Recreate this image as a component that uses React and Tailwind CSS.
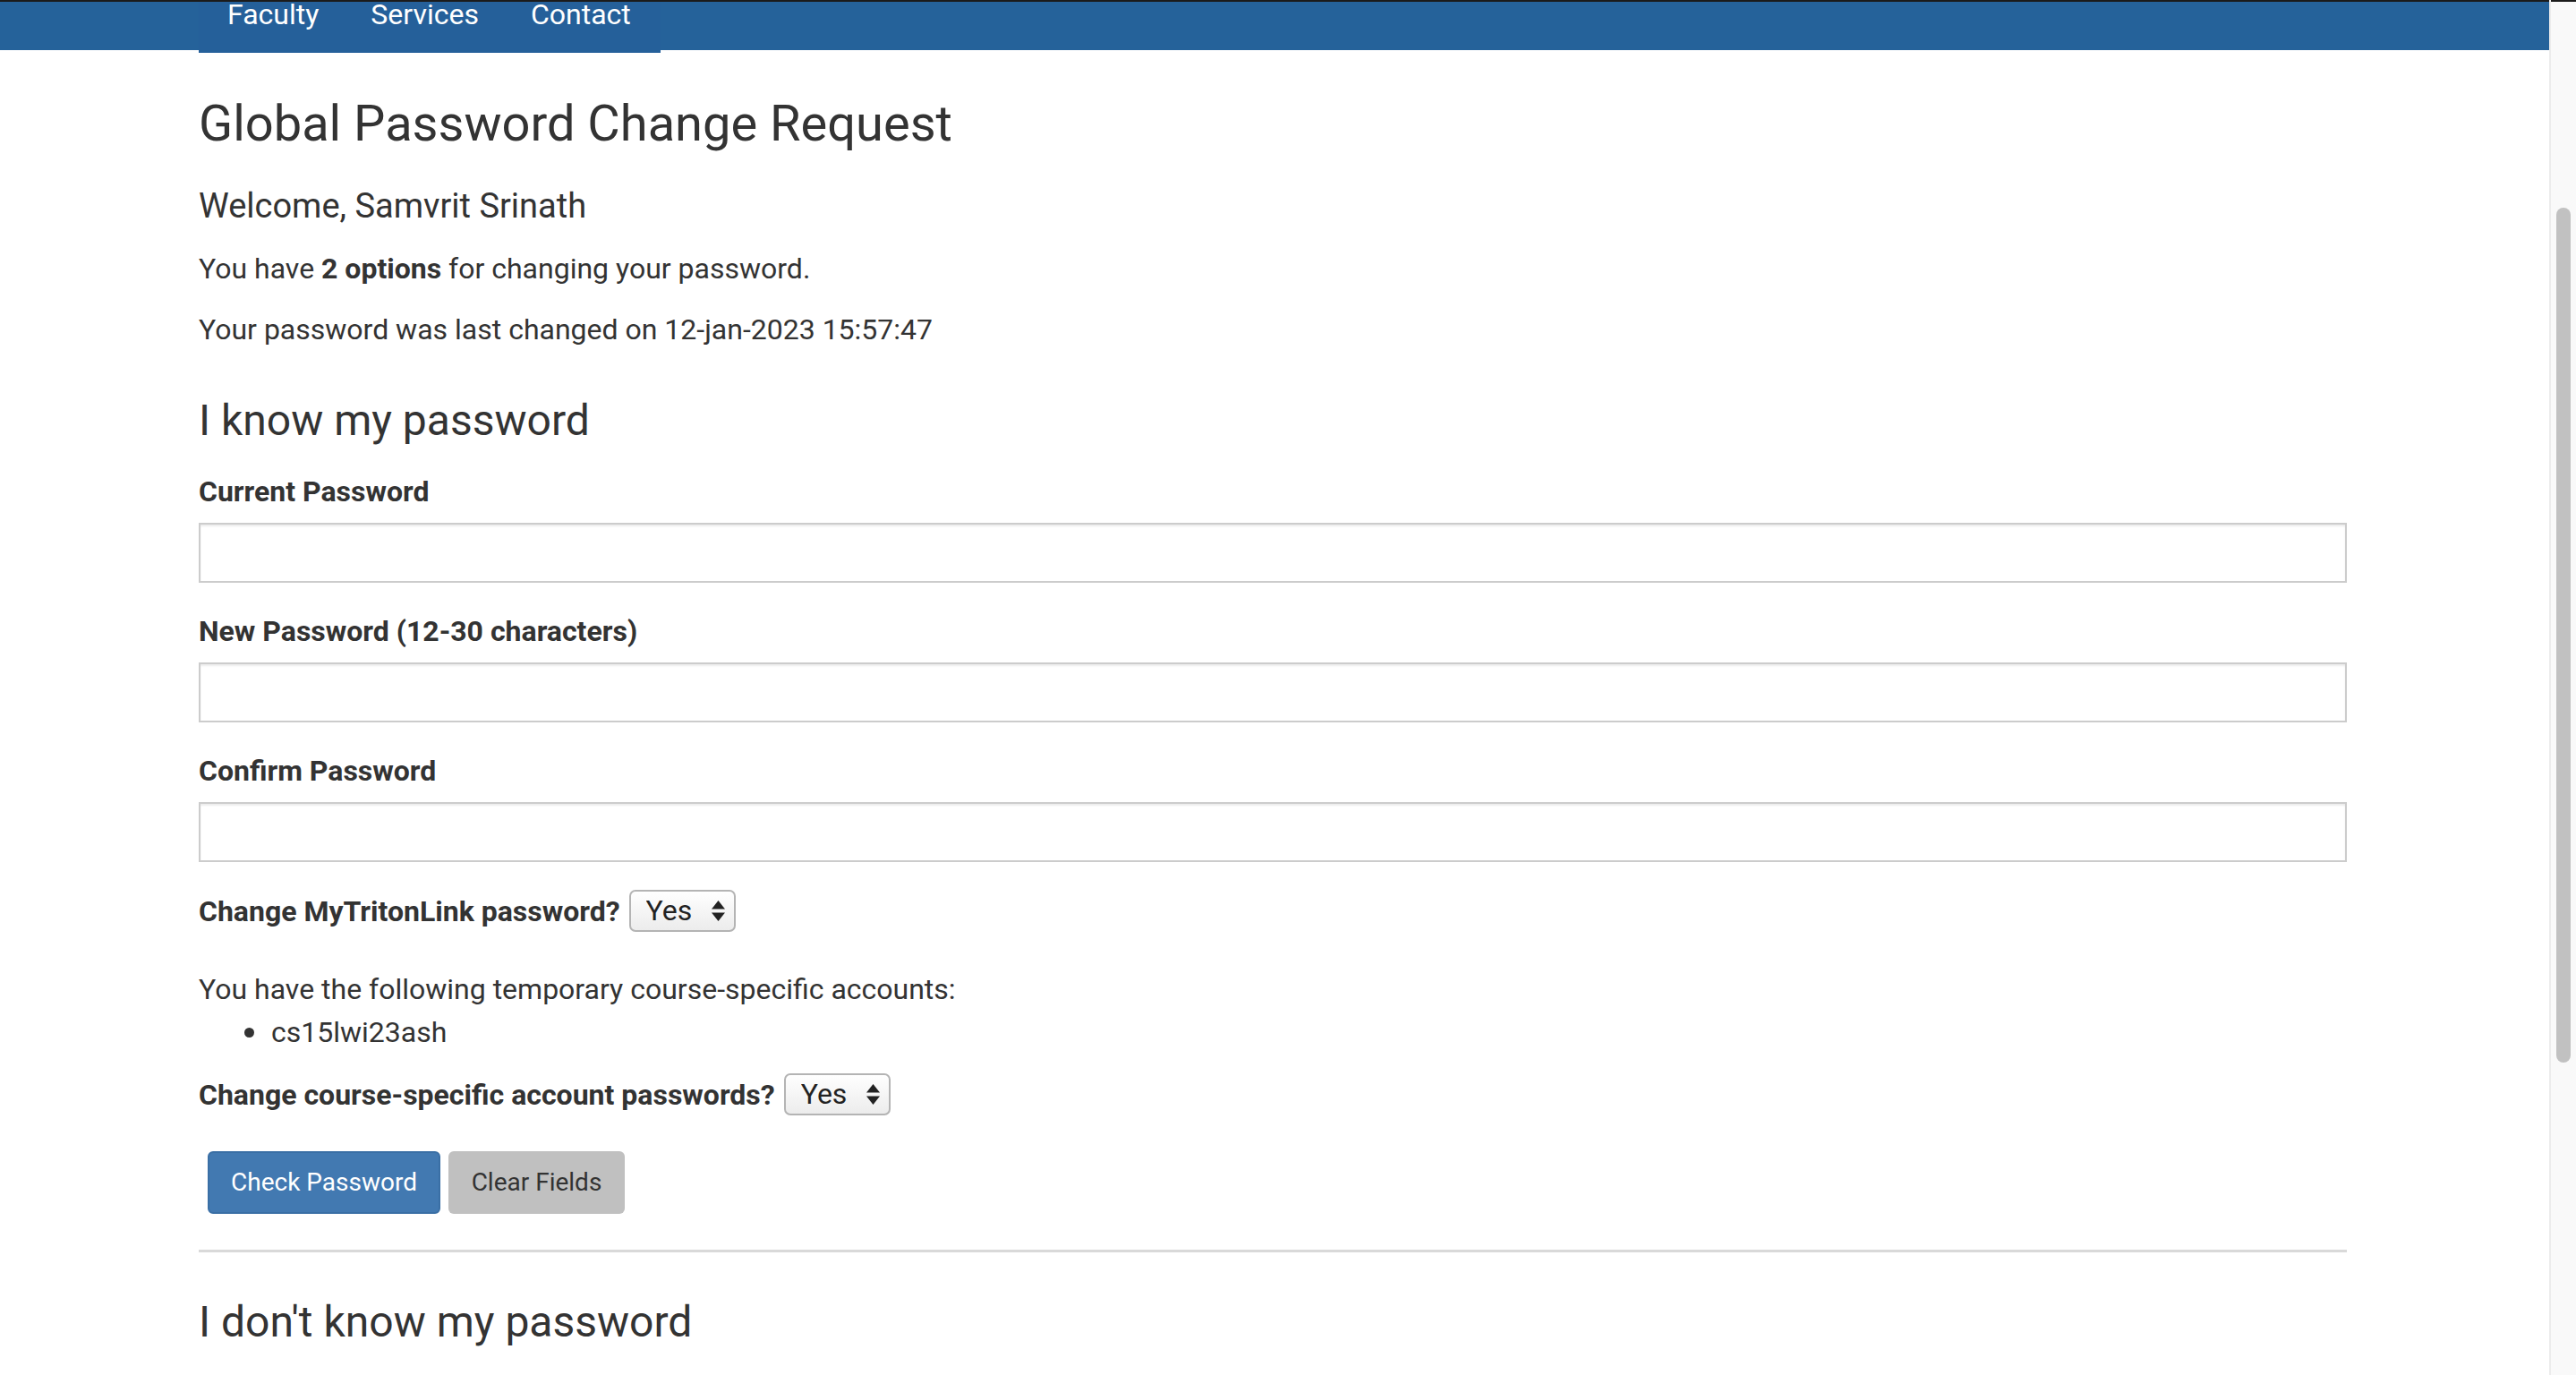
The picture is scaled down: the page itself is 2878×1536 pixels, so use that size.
import React, { useState } from "react";

const Select = () => {
  const [value, setValue] = useState("Yes");
  return (
    <div className="relative inline-block h-[47px] w-[119px]">
      <select
        value={value}
        onChange={(e) => setValue(e.target.value)}
        className="h-full w-full appearance-none rounded-[7px] border-2 border-[#b4b4b4] bg-gradient-to-b from-white to-[#ececec] pl-[17px] text-[32px] leading-[43px] text-[#222] outline-none"
      >
        <option>Yes</option>
        <option>No</option>
      </select>
      <svg className="pointer-events-none absolute right-[12px] top-[12px] h-[23px] w-[15px]" viewBox="0 0 15 23" fill="#222">
        <path d="M7.5 0 L15 9.5 L0 9.5 Z" />
        <path d="M0 13.5 L15 13.5 L7.5 23 Z" />
      </svg>
    </div>
  );
};

const Field = ({ label, mt }) => (
  <>
    <label className={`block text-[32px] font-bold leading-[40px] ${mt}`}>{label}</label>
    <input
      type="password"
      className="mt-[15px] block h-[67px] w-full border-2 border-[#cccccc] bg-white px-4 text-[30px] shadow-[inset_0_2px_2px_rgba(0,0,0,0.08)] outline-none"
    />
  </>
);

export default function App() {
  return (
    <div className="flex h-[1536px] w-full overflow-hidden bg-white font-['Roboto','Liberation_Sans',sans-serif] text-[#333333]">
      <div className="relative flex-1">
        <header className="h-[56px] border-t-2 border-[#1b1b1b] bg-[#25629a]">
          <nav className="ml-[222px] flex h-[57px] w-[516px] gap-[58px] bg-[#25609a] pl-[32px] text-[32px] leading-[34px] text-white">
            <a className="-mt-[3px]">Faculty</a>
            <a className="-mt-[3px]">Services</a>
            <a className="-mt-[3px]">Contact</a>
          </nav>
        </header>

        <main className="ml-[222px] w-[2400px]">
          <h1 className="mt-[47px] text-[56px] font-normal leading-[70px]">Global Password Change Request</h1>
          <h4 className="mt-[34px] text-[38px] leading-[46px]">Welcome, Samvrit Srinath</h4>
          <p className="mt-[27px] text-[32px] leading-[40px]">
            You have <b>2 options</b> for changing your password.
          </p>
          <p className="mt-[28px] text-[32px] leading-[40px]">Your password was last changed on 12-jan-2023 15:57:47</p>

          <h3 className="mt-[54px] text-[48px] leading-[56px]">I know my password</h3>
          <Field label="Current Password" mt="mt-[31px]" />
          <Field label="New Password (12-30 characters)" mt="mt-[34px]" />
          <Field label="Confirm Password" mt="mt-[34px]" />

          <div className="mt-[31px] flex h-[47px] items-center gap-[10px]">
            <span className="text-[32px] font-bold">Change MyTritonLink password?</span>
            <Select />
          </div>

          <p className="mt-[44px] text-[32px] leading-[40px]">You have the following temporary course-specific accounts:</p>
          <ul className="mt-[8px] pl-[51px] text-[32px] leading-[40px]">
            <li className="flex items-center gap-[19px]">
              <span className="h-[11px] w-[11px] rounded-full bg-[#333]" />
              cs15lwi23ash
            </li>
          </ul>

          <div className="mt-[26px] flex h-[47px] items-center gap-[10px]">
            <span className="text-[32px] font-bold">Change course-specific account passwords?</span>
            <Select />
          </div>

          <div className="ml-[10px] mt-[40px] flex gap-[9px]">
            <button className="h-[70px] w-[260px] rounded-[6px] border-2 border-[#3a6fa5] bg-[#4279b1] text-[28px] text-white">
              Check Password
            </button>
            <button className="h-[70px] w-[197px] rounded-[6px] bg-[#c0c0c0] text-[28px] text-[#333]">
              Clear Fields
            </button>
          </div>

          <hr className="mt-[40px] border-t-[3px] border-[#d9d9d9]" />

          <h3 className="mt-[50px] text-[48px] leading-[56px]">I don't know my password</h3>
        </main>
      </div>

      <div className="flex w-[30px] flex-col border-l-2 border-[#ececec] bg-[#f9f9f9]">
        <div className="h-[2px] bg-[#1b1b1b]" />
        <div className="ml-[6px] mt-[230px] h-[955px] w-[16px] rounded-full bg-[#c1c1c1]" />
      </div>
    </div>
  );
}
